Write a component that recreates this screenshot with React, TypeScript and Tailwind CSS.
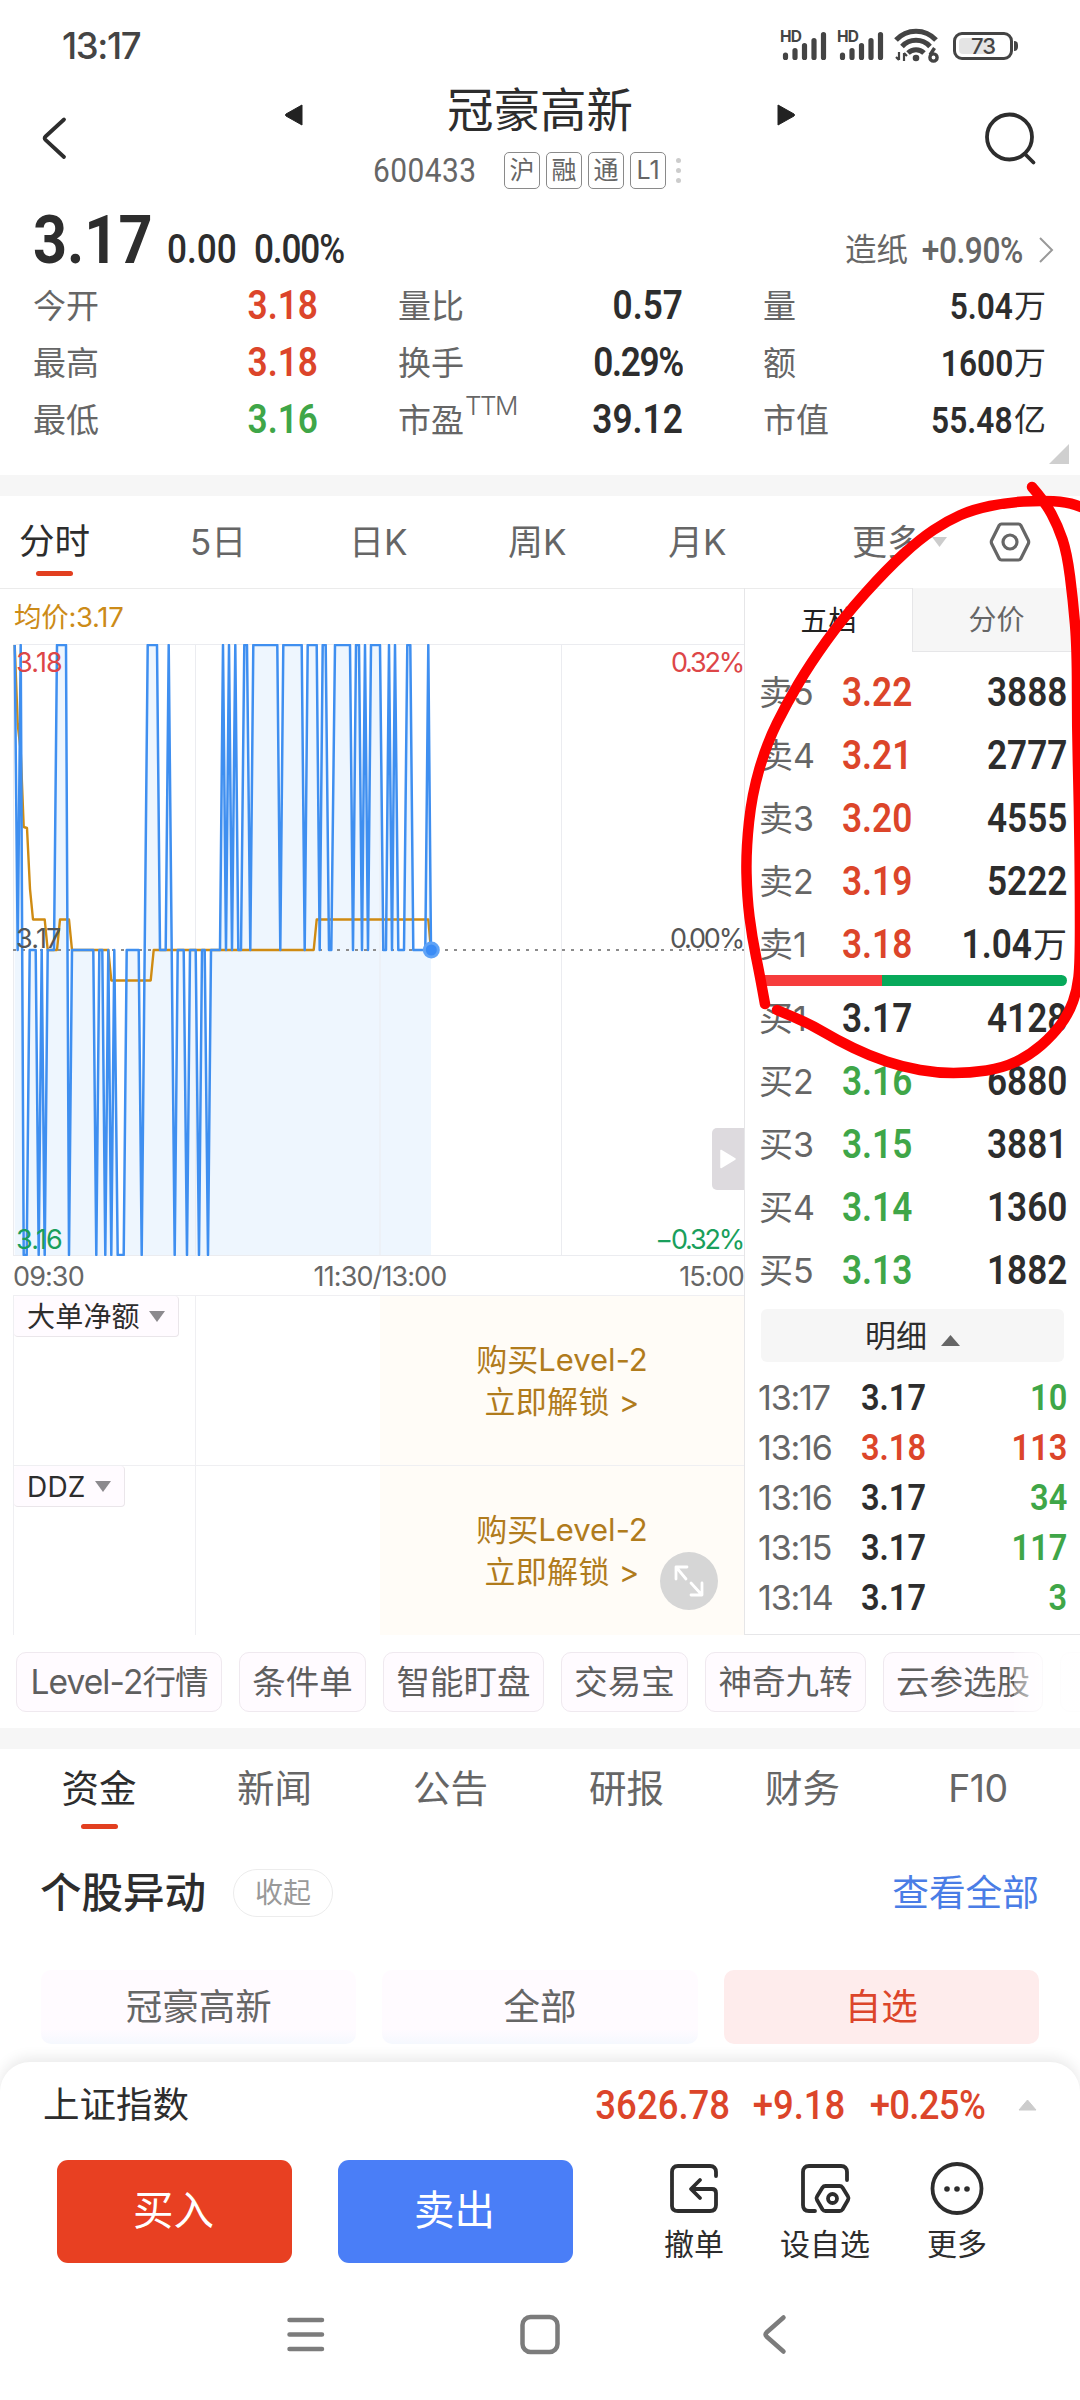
import React from "react";

const HIGH = 1;
const MID = 306;
const LOW = 611;

type Level = "H" | "M" | "L";

// Intraday price: [x, level]
const price: [number, Level][] = [
  [44, "H"], [53, "M"], [62, "H"], [71, "L"], [80, "L"], [89, "M"], [107, "M"], [116, "L"], [125, "M"], [134, "L"],
  [143, "M"], [162, "M"], [171, "H"], [198, "H"], [207, "L"], [216, "M"], [280, "M"], [289, "L"], [298, "M"], [307, "M"],
  [316, "L"], [325, "M"], [334, "L"], [343, "M"], [353, "L"], [371, "L"], [380, "M"], [416, "M"], [425, "L"], [443, "H"],
  [471, "H"], [480, "M"], [497, "M"], [506, "H"], [524, "L"], [533, "M"], [551, "M"], [561, "L"], [570, "M"], [587, "M"],
  [597, "L"], [606, "M"], [614, "M"], [624, "L"], [633, "M"], [660, "M"], [669, "H"], [678, "M"], [687, "H"], [696, "M"],
  [706, "H"], [715, "M"], [723, "M"], [733, "H"], [741, "H"], [751, "M"], [760, "H"], [832, "H"], [841, "M"], [850, "H"],
  [905, "H"], [914, "M"], [923, "H"], [950, "H"], [959, "M"], [968, "H"], [977, "H"], [987, "M"], [994, "M"], [1005, "H"],
  [1050, "H"], [1059, "M"], [1068, "H"], [1077, "H"], [1086, "M"], [1095, "H"], [1104, "M"], [1113, "H"], [1140, "H"],
  [1150, "M"], [1158, "M"], [1167, "H"], [1176, "M"], [1185, "H"], [1195, "M"], [1212, "M"], [1222, "H"], [1231, "H"],
  [1240, "M"], [1276, "M"], [1285, "H"], [1293, "M"],
];

const average: [number, number][] = [
  [44, 1], [53, 80], [62, 107], [71, 183], [81, 184], [90, 245], [99, 275.5], [134, 275.5], [143, 306], [171, 306],
  [180, 275.5], [207, 275.5], [216, 306], [325, 306], [334, 336.5], [452, 336.5], [461, 306], [941, 306], [950, 275.5],
  [1285, 275.5], [1293, 306],
];

const levelY: Record<Level, number> = { H: HIGH, M: MID, L: LOW };
const pricePoints = price.map(([x, l]) => `${(x / 3).toFixed(1)},${levelY[l]}`).join(" ");
const averagePoints = average.map(([x, y]) => `${(x / 3).toFixed(1)},${y}`).join(" ");

const loopDown: [number, number][] = [
  [1032, 487], [1045, 502], [1058, 526], [1067, 553], [1073, 600], [1077, 648], [1077, 727], [1079, 806], [1080, 889],
  [1080, 964], [1077, 990], [1069, 1013], [1053, 1035], [1030, 1055], [1003, 1068], [970, 1073], [937, 1073], [903, 1067],
  [870, 1056], [837, 1040], [810, 1024], [777, 1010],
];
const loopUp: [number, number][] = [
  [765, 1004], [760, 976], [752, 937], [747, 897], [746, 850], [752, 794], [767, 743], [787, 703], [810, 664], [843, 618],
  [887, 569], [920, 539], [947, 521], [973, 509.5], [1007, 502.5], [1040, 500.5], [1067, 502], [1084, 508],
];

function smooth(points: [number, number][]) {
  let d = `M${points[0][0]} ${points[0][1]}`;
  for (let i = 1; i < points.length - 1; i++) {
    const mx = (points[i][0] + points[i + 1][0]) / 2;
    const my = (points[i][1] + points[i + 1][1]) / 2;
    d += ` Q${points[i][0]} ${points[i][1]} ${mx} ${my}`;
  }
  const last = points[points.length - 1];
  return `${d} L${last[0]} ${last[1]}`;
}

/** Condensed figures used for prices and volumes. */
function Num({ children, className = "" }: { children: React.ReactNode; className?: string }) {
  return (
    <span className={`inline-block scale-x-[0.88] whitespace-nowrap font-['Roboto'] ${className}`}>
      {children}
    </span>
  );
}

function SignalBars() {
  return (
    <div className="relative h-[34px] w-[48px]">
      <span className="absolute left-0 top-[1px] text-[15.500px] font-bold leading-[14px] tracking-[-0.8px]">HD</span>
      <svg className="absolute left-0 top-0" width="48" height="34" viewBox="0 0 48 34" stroke="#444" strokeWidth="5.200" strokeLinecap="round">
        <path d="M5.500 28.400v-2.400M15 28.400v-6.800M24.500 28.400v-11.800M34 28.400v-16.800M43.500 28.400v-22.800" />
      </svg>
    </div>
  );
}

function StatusBar() {
  return (
    <div className="flex h-[76px] items-center pl-[62px] pr-[62px] pt-4 text-[#444]">
      <span className="text-[36.500px] font-medium leading-[40px] tracking-[-1.4px]">13:17</span>
      <div className="ml-auto flex items-center">
        <SignalBars />
        <div className="ml-[9px]">
          <SignalBars />
        </div>
        <svg className="ml-[8px]" width="48" height="36" viewBox="0 0 48 36" fill="none" stroke="#444" strokeWidth="5">
          <path d="M3 12a27 27 0 0 1 40 0" />
          <path d="M9 18.500a19 19 0 0 1 28 0" />
          <path d="M15 25a11.500 11.500 0 0 1 16 0" />
          <circle cx="23" cy="30" r="1.800" fill="#444" strokeWidth="3" />
          <path d="M6 24v8M6 32l-3-3M11 33v-8M11 25l3 3" strokeWidth="2.200" />
          <path d="M41.500 20l-4.500 7" strokeWidth="3.400" />
          <circle cx="40.500" cy="29.500" r="3.600" strokeWidth="3.400" />
        </svg>
        <div className="ml-[12px] flex h-[28px] w-[60px] items-center rounded-[9px] border-[3px] border-[#444] p-[3px]">
          <div className="relative flex h-full w-full items-center justify-center">
            <div className="absolute left-0 h-full w-[35px] rounded-l-[4px] bg-[#e4e4e4]" />
            <span className="relative text-[22px] font-medium leading-none tracking-[-1px]">73</span>
          </div>
        </div>
        <div className="ml-[1px] h-[10px] w-[4px] rounded-r-full bg-[#444]" />
      </div>
    </div>
  );
}

function Header() {
  return (
    <div className="flex h-[124px] items-center text-[#2d2d2d]">
      <svg className="ml-[39px]" width="30" height="46" viewBox="0 0 30 46" fill="none" stroke="currentColor" strokeWidth="3.800" strokeLinecap="round" strokeLinejoin="round">
        <path d="M25 4.500L6.500 21.500q-1.800 1.700 0 3.400L25 42" />
      </svg>
      <div className="ml-[216px] h-full w-[510px]">
        <div className="flex h-[68px] items-center justify-between">
          <svg width="18" height="24" viewBox="0 0 18 24" className="mt-[10px]"><path d="M17 2v20L1 13q-1-1 0-2z" fill="#222" stroke="#222" strokeLinejoin="round" /></svg>
          <h1 className="text-[46.500px] font-normal leading-[60px]">冠豪高新</h1>
          <svg width="18" height="24" viewBox="0 0 18 24" className="mt-[10px]"><path d="M1 2v20l16-9q1-1 0-2z" fill="#222" stroke="#222" strokeLinejoin="round" /></svg>
        </div>
        <div className="flex h-[52px] items-center pl-[88px] text-[#666]">
          <Num className="w-[131px] origin-left text-[34px] font-normal leading-[40px] tracking-[0.5px]">600433</Num>
          <div className="flex gap-[6px] text-[25px] leading-none">
            {["沪", "融", "通", "L1"].map((t) => (
              <span key={t} className="flex h-[37px] w-[36px] items-center justify-center rounded-[5px] border border-[#8a8a8a]">{t}</span>
            ))}
          </div>
          <div className="ml-[10px] flex flex-col gap-[5px]">
            <i className="size-[5px] rounded-full bg-[#ccc]" />
            <i className="size-[5px] rounded-full bg-[#ccc]" />
            <i className="size-[5px] rounded-full bg-[#ccc]" />
          </div>
        </div>
      </div>
      <svg className="ml-auto mr-[41px]" width="56" height="56" viewBox="0 0 56 56" fill="none" stroke="currentColor" strokeWidth="3.800" strokeLinecap="round">
        <circle cx="26.500" cy="27" r="22.500" />
        <path d="M42 44l8.500 8.500" />
      </svg>
    </div>
  );
}

function Stat({ label, sup, value, unit, tone = "text-[#2d2d2d]" }: { label: string; sup?: string; value: string; unit?: string; tone?: string }) {
  const size = unit ? "text-[36px] pt-[2px]" : value.endsWith("%") ? "text-[40px] tracking-[-1.5px]" : "text-[40px]";
  return (
    <div className="flex h-[57px] items-center justify-between">
      <span className="relative text-[33px] leading-[40px] text-[#666]">
        {label}
        {sup && <span className="absolute left-[67px] top-[-12px] text-[26px] font-light leading-[36px] tracking-[-1.5px]">{sup}</span>}
      </span>
      <span className={`flex items-center ${tone}`}>
        <Num className={`origin-right font-semibold leading-[50px] ${size}`}>{value}</Num>
        {unit && <span className="ml-[1px] text-[32px] leading-[50px]">{unit}</span>}
      </span>
    </div>
  );
}

function Summary() {
  const red = "text-[#dc452a]";
  return (
    <section className="relative h-[275px] pl-[33px] pr-[34px] pt-[1px]">
      <div className="flex h-[76px] items-baseline text-[#2d2d2d]">
        <Num className="mt-[-3px] w-[134px] origin-left text-[67.500px] font-bold leading-[84px]">3.17</Num>
        <Num className="w-[87px] origin-left text-[40px] font-medium leading-[50px]">0.00</Num>
        <Num className="w-[110px] origin-left text-[40px] font-medium leading-[50px] tracking-[-1.3px]">0.00%</Num>
        <div className="ml-auto flex items-baseline text-[#666]">
          <span className="relative top-[-2px] text-[31.500px] leading-[40px]">造纸</span>
          <Num className="origin-right text-[36px] font-medium leading-[50px] tracking-[-0.5px]">+0.90%</Num>
          <svg className="ml-[15px] mr-[-8px]" width="16" height="26" viewBox="0 0 16 26" fill="none" stroke="#999" strokeWidth="2"><path d="M2 1l12 12L2 25" /></svg>
        </div>
      </div>
      <div className="grid grid-cols-[285px_285px_283px] gap-x-[80px]">
        <Stat label="今开" value="3.18" tone={red} />
        <Stat label="量比" value="0.57" />
        <Stat label="量" value="5.04" unit="万" />
        <Stat label="最高" value="3.18" tone={red} />
        <Stat label="换手" value="0.29%" />
        <Stat label="额" value="1600" unit="万" />
        <Stat label="最低" value="3.16" tone="text-[#3fa648]" />
        <Stat label="市盈" sup="TTM" value="39.12" />
        <Stat label="市值" value="55.48" unit="亿" />
      </div>
      <svg className="absolute bottom-[11px] right-[11px]" width="20" height="20"><path d="M20 0v20H0z" fill="#cfcfcf" /></svg>
    </section>
  );
}

function ChartTabs() {
  return (
    <nav className="flex h-[93px] items-center border-b border-[#ebebeb] text-[34px] leading-[40px] text-[#666]">
      <div className="relative ml-[19px] w-[171px] text-[35.500px] text-[#2d2d2d]">
        分时
        <i className="absolute bottom-[-14px] left-[17px] h-[5px] w-[37px] rounded-full bg-[#e23f20]" />
      </div>
      <span className="w-[159px] text-[35px]">5日</span>
      <span className="w-[159px] text-[35px]">日K</span>
      <span className="w-[160px] text-[35px]">周K</span>
      <span className="w-[184px] text-[35px]">月K</span>
      <span className="text-[35px]">更多</span>
      <svg className="ml-[10px]" width="15" height="10"><path d="M0 0h15L7.500 10z" fill="#ccc" /></svg>
      <svg className="ml-[41px]" width="44" height="42" viewBox="0 0 44 42" fill="none" stroke="#666" strokeWidth="3.200" strokeLinejoin="round">
        <path d="M13.500 3h17q1.500 0 2.300 1.300l7.500 14.900q.8 1.800 0 3.600l-7.500 14.900q-.8 1.300-2.300 1.300h-17q-1.500 0-2.300-1.300l-7.500-14.900q-.8-1.800 0-3.600l7.500-14.900q.8-1.300 2.300-1.300z" />
        <circle cx="22" cy="21" r="7" />
      </svg>
    </nav>
  );
}

function PriceChart() {
  return (
    <div className="relative h-[612px] text-[27px] leading-[30px] tracking-[-0.8px]">
      <svg className="block" width="744" height="612" viewBox="0 0 744 612" fill="none">
        <polygon points={`14.700,${LOW} ${pricePoints} 431,${LOW}`} fill="#eef6fe" />
        <path d="M13.500 612V.500H744M195.500 0v612M380 0v612M561.500 0v612M13 611.500h731" stroke="#ebecf0" strokeWidth="1" />
        <path d="M13 306h731" stroke="#8c8c8c" strokeWidth="2" strokeDasharray="3 6" />
        <polyline points={averagePoints} stroke="#cf8b12" strokeWidth="2.400" strokeLinejoin="round" />
        <polyline points={pricePoints} stroke="#3f8ff0" strokeWidth="2.500" strokeLinejoin="round" />
        <circle cx="431.300" cy="306" r="8.500" fill="#5fa3f7" />
        <circle cx="431.300" cy="306" r="5.500" fill="#3b8cf6" />
      </svg>
      <span className="absolute left-[16px] top-[4px] text-[#dd4648]">3.18</span>
      <span className="absolute left-[16px] top-[280px] text-[#555]">3.17</span>
      <span className="absolute left-[16px] top-[581px] text-[#1a9f5c]">3.16</span>
      <span className="absolute right-[1px] top-[4px] tracking-[-2.200px] text-[#dd4648]">0.32%</span>
      <span className="absolute right-[1px] top-[280px] tracking-[-2.200px] text-[#555]">0.00%</span>
      <span className="absolute right-[1px] top-[581px] tracking-[-2.200px] text-[#1a9f5c]">−0.32%</span>
      <div className="absolute right-0 top-[484px] flex h-[62px] w-[32px] items-center justify-center rounded-l-[5px] bg-[#dddade]">
        <svg width="16" height="20"><path d="M1 1.500v17L15 10z" fill="#fff" stroke="#fff" strokeWidth="1.500" strokeLinejoin="round" /></svg>
      </div>
    </div>
  );
}

function LockedPanel({ label, children }: { label: string; children?: React.ReactNode }) {
  return (
    <div className="relative ml-[13px] flex h-[170px] border-l border-t border-[#efeff2]">
      <div className="w-[182px] border-r border-[#efeff2]">
        <span className="flex h-[41px] w-max items-center gap-[9px] rounded-[4px] border border-l-0 border-t-0 border-[#eae6ea] bg-[#fffbff] pl-[13px] pr-[13px] pt-[1px] text-[28px] leading-[36px] tracking-[0.200px] text-[#2d2d2d]">
          {label}
          <svg width="16" height="11"><path d="M0 0h16L8 11z" fill="#8c8a8e" /></svg>
        </span>
      </div>
      <div className="w-[184px]" />
      <div className="flex flex-1 flex-col items-center justify-center bg-[#fffcf7] pt-[1px] text-[31px] leading-[42px] text-[#b07b1c]">
        <span>购买Level-2</span>
        <span className="tracking-[0.3px]">立即解锁 &gt;</span>
      </div>
      {children}
    </div>
  );
}

function ChartColumn() {
  return (
    <div className="h-[1047px] w-[744px]">
      <div className="flex h-[56px] items-center pl-[14px] pt-[2px] text-[27.500px] leading-[30px] tracking-[-0.3px] text-[#cc8b18]">均价:3.17</div>
      <PriceChart />
      <div className="relative flex h-[39px] items-center justify-between pl-[13px] pt-[2px] text-[27px] leading-[30px] tracking-[-0.9px] text-[#666]">
        <span>09:30</span>
        <span>15:00</span>
        <span className="absolute left-[380px] -translate-x-1/2">11:30/13:00</span>
      </div>
      <LockedPanel label="大单净额" />
      <LockedPanel label="DDZ">
        <div className="absolute right-[26px] top-[86px] flex size-[58px] items-center justify-center rounded-full bg-[#d6d6d6]">
          <svg width="30" height="32" viewBox="0 0 30 32" fill="none" stroke="#fff" strokeWidth="2.800" strokeLinecap="round" strokeLinejoin="round">
            <path d="M2 14V2h11M2.500 2.500L12 14M28 18v12H17M27.500 29.500L17 18" />
          </svg>
        </div>
      </LockedPanel>
    </div>
  );
}

type Tone = "r" | "g" | "k";
const toneClass: Record<Tone, string> = { r: "text-[#dc452a]", g: "text-[#3fa648]", k: "text-[#2d2d2d]" };

function Quote({ label, value, volume, unit, tone }: { label: string; value: string; volume: string; unit?: string; tone: Tone }) {
  return (
    <div className="flex h-[63px] items-center pt-[2px]">
      <span className="ml-[-1px] w-[83px] text-[34px] leading-[40px] text-[#666]">{label}</span>
      <Num className={`origin-left text-[40px] font-semibold leading-[50px] ${toneClass[tone]}`}>{value}</Num>
      <span className="ml-auto flex items-center text-[#2d2d2d]">
        <Num className="origin-right text-[40px] font-semibold leading-[50px]">{volume}</Num>
        {unit && <span className="ml-[1px] text-[34px] leading-[50px]">{unit}</span>}
      </span>
    </div>
  );
}

const ticks: [string, string, Tone, string, Tone][] = [
  ["13:17", "3.17", "k", "10", "g"],
  ["13:16", "3.18", "r", "113", "r"],
  ["13:16", "3.17", "k", "34", "g"],
  ["13:15", "3.17", "k", "117", "g"],
  ["13:14", "3.17", "k", "3", "g"],
  ["", "3.17", "k", "100", "g"],
];

function OrderBook() {
  return (
    <aside className="h-[1047px] w-[336px] overflow-hidden border-b border-l border-[#e6e6e8]">
      <div className="flex h-[64px] text-[28px] leading-[36px]">
        <div className="flex w-[167px] items-center justify-center pt-px text-[#222]">五档</div>
        <div className="flex flex-1 items-center justify-center border-b border-l border-[#e6e6e8] bg-[#f6f6f6] pt-px text-[#666]">分价</div>
      </div>
      <div className="pl-[15px] pr-[13px] pt-[8px]">
        <Quote label="卖5" value="3.22" volume="3888" tone="r" />
        <Quote label="卖4" value="3.21" volume="2777" tone="r" />
        <Quote label="卖3" value="3.20" volume="4555" tone="r" />
        <Quote label="卖2" value="3.19" volume="5222" tone="r" />
        <Quote label="卖1" value="3.18" volume="1.04" unit="万" tone="r" />
        <div className="flex h-[11px] overflow-hidden rounded-full">
          <div className="w-[122px] bg-[#f63c3c]" />
          <div className="flex-1 bg-[#07a95a]" />
        </div>
        <Quote label="买1" value="3.17" volume="4128" tone="k" />
        <Quote label="买2" value="3.16" volume="6880" tone="g" />
        <Quote label="买3" value="3.15" volume="3881" tone="g" />
        <Quote label="买4" value="3.14" volume="1360" tone="g" />
        <Quote label="买5" value="3.13" volume="1882" tone="g" />
        <div className="ml-[1px] mr-[3px] mt-[8px] flex h-[53px] items-center justify-center gap-[14px] rounded-[6px] bg-[#f6f6f6] text-[31px] leading-[40px] text-[#2d2d2d]">
          明细
          <svg className="mt-[10px]" width="19" height="11"><path d="M0 11h19L9.500 0z" fill="#666" /></svg>
        </div>
        <div className="pt-[11px]">
          {ticks.map(([time, value, valueTone, volume, volumeTone], i) => (
            <div key={i} className="flex h-[50px] items-center">
              <span className="ml-[-2px] w-[103px] text-[34px] leading-[40px] tracking-[-1.2px] text-[#666]">{time}</span>
              <Num className={`origin-left text-[37px] font-semibold leading-[48px] ${toneClass[valueTone]}`}>{value}</Num>
              <Num className={`ml-auto origin-right text-[37px] font-semibold leading-[48px] ${toneClass[volumeTone]}`}>{volume}</Num>
            </div>
          ))}
        </div>
      </div>
    </aside>
  );
}

const chips: [string, string][] = [
  ["Level-2行情", "w-[206px] tracking-[-0.9px]"],
  ["条件单", "w-[127px]"],
  ["智能盯盘", "w-[161px]"],
  ["交易宝", "w-[127px]"],
  ["神奇九转", "w-[161px]"],
  ["云参选股", "w-[160px]"],
  ["", "w-[160px]"],
];

function Chips() {
  return (
    <div className="relative flex h-[93px] items-start gap-[17px] overflow-hidden pl-[16px] pt-[17px] text-[33.500px] leading-[40px] text-[#5f5f5f]">
      {chips.map(([label, className], i) => (
        <span key={i} className={`flex h-[60px] shrink-0 items-center justify-center whitespace-nowrap rounded-[10px] border border-[#efe9ef] bg-[#fffbff] ${className}`}>
          {label}
        </span>
      ))}
      <div className="absolute right-0 top-0 h-full w-[66px] bg-gradient-to-r from-white/30 to-white/90 to-60%" />
    </div>
  );
}

function NewsTabs() {
  return (
    <nav className="flex h-[78px] items-center pl-[11px] pt-px text-[37.500px] leading-[44px] text-[#666]">
      <div className="relative w-[176px] text-center text-[#2d2d2d]">
        资金
        <i className="absolute bottom-[-18px] left-[70px] h-[5px] w-[37px] rounded-full bg-[#e23f20]" />
      </div>
      <span className="w-[175px] text-center">新闻</span>
      <span className="w-[177px] text-center">公告</span>
      <span className="w-[175px] text-center">研报</span>
      <span className="w-[177px] text-center">财务</span>
      <span className="w-[174px] text-center tracking-[-0.5px]">F10</span>
    </nav>
  );
}

function Movers() {
  return (
    <section className="flex h-[235px] flex-col px-[41px]">
      <div className="mt-[38px] flex h-[56px] items-center">
        <h2 className="ml-[-1px] text-[41.500px] font-medium leading-[50px] text-[#2d2d2d]">个股异动</h2>
        <span className="ml-[27px] flex h-[48px] w-[100px] items-center justify-center rounded-full border border-[#ececec] text-[28px] leading-none text-[#999]">收起</span>
        <span className="ml-auto text-[36.700px] leading-[44px] text-[#4a7de6]">查看全部</span>
      </div>
      <div className="mt-[49px] grid grid-cols-3 gap-[26px] text-[36.500px] leading-[44px] text-[#666]">
        <span className="flex h-[74px] items-center justify-center rounded-[10px] bg-gradient-to-b from-[#fffbff] from-80% to-[#f5f8fe]">冠豪高新</span>
        <span className="flex h-[74px] items-center justify-center rounded-[10px] bg-gradient-to-b from-[#fffbff] from-80% to-[#f5f8fe]">全部</span>
        <span className="flex h-[74px] items-center justify-center rounded-[10px] bg-[#feecec] text-[#dc452a]">自选</span>
      </div>
    </section>
  );
}

function Action({ label, className, children }: { label: string; className: string; children: React.ReactNode }) {
  return (
    <div className={`flex h-[103px] flex-col items-center text-[#2d2d2d] ${className}`}>
      <svg width="56" height="56" viewBox="0 0 56 56" fill="none" stroke="currentColor" strokeWidth="3.800" strokeLinecap="round" strokeLinejoin="round">
        {children}
      </svg>
      <span className="mt-[10px] whitespace-nowrap text-[30px] leading-[36px]">{label}</span>
    </div>
  );
}

function BottomBar() {
  return (
    <div className="relative h-[338px] rounded-t-[30px] bg-white shadow-[0_-4px_14px_rgba(0,0,0,0.09)]">
      <div className="flex h-[86px] items-center pl-[43px] pr-[43px]">
        <span className="text-[36.500px] leading-[44px] text-[#2d2d2d]">上证指数</span>
        <div className="ml-auto flex items-center text-[41.500px] font-medium leading-[50px] text-[#dc452a]">
          <Num className="origin-right">3626.78</Num>
          <Num className="ml-[10px] origin-right">+9.18</Num>
          <Num className="ml-[9px] origin-right tracking-[-0.8px]">+0.25%</Num>
        </div>
        <svg className="ml-[33px]" width="19" height="12"><path d="M1 11h17L9.500 1z" fill="#ccc" stroke="#ccc" strokeLinejoin="round" /></svg>
      </div>
      <div className="mt-[12px] flex h-[103px]">
        <button className="ml-[57px] w-[235px] rounded-[11px] bg-[#e84022] pr-[2px] text-[40.500px] text-white">买入</button>
        <button className="ml-[46px] w-[235px] rounded-[11px] bg-[#4a7ef7] pr-[2px] text-[40.500px] text-white">卖出</button>
        <Action label="撤单" className="ml-[60px] w-[122px]">
          <path d="M50 16v-4q0-6-6-6H12q-6 0-6 6v34q0 5 6 5h32q6 0 6-6V33q0-4-4-4H26M34 20l-9 9 9 9" />
        </Action>
        <Action label="设自选" className="ml-[9px] w-[122px]">
          <path d="M50 20v-8q0-6-6-6H12q-6 0-6 6v33q0 6 6 6h6" />
          <path d="M27.500 26h14q2 0 3 1.500l5.500 9q1 1.500 0 3.500l-5.500 9.500Q43.500 51 41.500 51h-14q-2 0-3-1.500L19 40q-1-2 0-3.500l5.500-9q1-1.500 3-1.500z" transform="translate(1 0)" />
          <circle cx="35.500" cy="38.500" r="4.500" />
        </Action>
        <Action label="更多" className="ml-[10px] w-[122px]">
          <circle cx="28" cy="28.500" r="24.500" />
          <g fill="currentColor" stroke="none">
            <circle cx="18" cy="29" r="2.800" />
            <circle cx="28" cy="29" r="2.800" />
            <circle cx="38" cy="29" r="2.800" />
          </g>
        </Action>
      </div>
      <div className="flex items-center pl-[285px] pt-[48px]">
        <svg width="40" height="48" viewBox="0 0 40 48" stroke="#7c7c7c" strokeWidth="4.500" strokeLinecap="round"><path d="M4.500 9h32.500M4.500 23.500h32.500M4.500 38h32.500" /></svg>
        <svg className="ml-[193px]" width="44" height="48" viewBox="0 0 44 48" fill="none" stroke="#7c7c7c" strokeWidth="4.500"><rect x="4.500" y="6" width="35" height="35" rx="8" /></svg>
        <svg className="ml-[199px]" width="30" height="48" viewBox="0 0 30 48" fill="none" stroke="#7c7c7c" strokeWidth="4.500" strokeLinecap="round" strokeLinejoin="round"><path d="M22.500 6.500L5.500 21.500q-2 2 0 4L22.500 40.500" /></svg>
      </div>
    </div>
  );
}

export default function App() {
  return (
    <main className="relative flex h-[2400px] w-[1080px] flex-col overflow-hidden bg-white font-['Inter','Noto_Sans_CJK_SC',sans-serif]">
      <StatusBar />
      <Header />
      <Summary />
      <div className="h-[21px] bg-[#f6f6f6]" />
      <ChartTabs />
      <div className="mt-[-1px] flex">
        <ChartColumn />
        <OrderBook />
      </div>
      <Chips />
      <div className="h-[21px] bg-[#f6f6f6]" />
      <NewsTabs />
      <Movers />
      <BottomBar />
      <svg className="pointer-events-none absolute left-0 top-0" width="1080" height="1100" viewBox="0 0 1080 1100" fill="none" stroke="#fe0000" strokeWidth="10.500" strokeLinecap="round" strokeLinejoin="round">
        <path d={smooth(loopDown)} />
        <path d={smooth(loopUp)} />
      </svg>
    </main>
  );
}
